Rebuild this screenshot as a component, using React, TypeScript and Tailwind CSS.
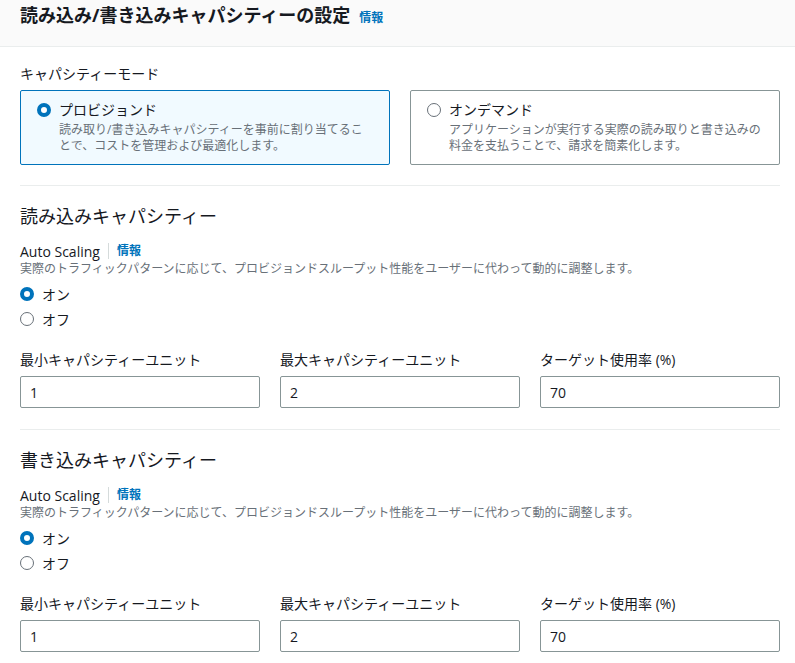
const font = { fontFamily: '"Open Sans", "Noto Sans CJK JP", sans-serif' };

const Radio = ({ checked }: { checked: boolean }) =>
  checked ? (
    <span className="inline-block w-[14px] h-[14px] rounded-full border-[4px] border-[#0073bb] bg-white shrink-0" />
  ) : (
    <span className="inline-block w-[14px] h-[14px] rounded-full border-[1.5px] border-[#687078] bg-white shrink-0" />
  );

const ModeCard = ({
  title,
  lines,
  selected,
}: {
  title: string;
  lines: string[];
  selected: boolean;
}) => (
  <div
    className={
      selected
        ? 'border border-[#0073bb] bg-[#f1faff] rounded-[2px] pt-[9px] pb-[10px] pl-4 pr-3'
        : 'border border-[#879596] bg-white rounded-[2px] pt-[9px] pb-[10px] pl-4 pr-3'
    }
  >
    <div className="flex items-center gap-2 h-5">
      <Radio checked={selected} />
      <span className="text-[14px] leading-5 text-[#16191f]">{title}</span>
    </div>
    <div className="mt-[2px] pl-[22px] text-[12px] leading-4 text-[#687078]">
      {lines.map((l) => (
        <div key={l}>{l}</div>
      ))}
    </div>
  </div>
);

const CapacitySection = ({ title }: { title: string }) => (
  <div>
    <h3 className="mt-[18px] text-[18px] leading-6 font-normal text-[#16191f]">{title}</h3>
    <div className="mt-[13px] flex items-center h-5 text-[14px] text-[#16191f]">
      <span>Auto Scaling</span>
      <span className="mx-2 h-4 w-px bg-[#d5dbdb]" />
      <span className="text-[12px] font-bold text-[#0073bb]">情報</span>
    </div>
    <p className="text-[12px] leading-4 text-[#687078]">
      実際のトラフィックパターンに応じて、プロビジョンドスループット性能をユーザーに代わって動的に調整します。
    </p>
    <div className="mt-[7px] flex flex-col gap-[5px]">
      <label className="flex items-center gap-2 h-5 text-[14px] text-[#16191f]">
        <Radio checked />
        オン
      </label>
      <label className="flex items-center gap-2 h-5 text-[14px] text-[#16191f]">
        <Radio checked={false} />
        オフ
      </label>
    </div>
    <div className="mt-[21px] grid grid-cols-3 gap-5">
      {[
        ['最小キャパシティーユニット', '1'],
        ['最大キャパシティーユニット', '2'],
        ['ターゲット使用率 (%)', '70'],
      ].map(([label, value]) => (
        <div key={label}>
          <div className="text-[14px] leading-5 text-[#16191f]">{label}</div>
          <input
            readOnly
            value={value}
            style={font}
            className="mt-[6px] w-full h-8 border border-[#879596] rounded-[2px] px-[9px] text-[14px] text-[#16191f] bg-white outline-none"
          />
        </div>
      ))}
    </div>
  </div>
);

export default function App() {
  return (
    <div className="w-[795px] min-h-[663px] bg-white overflow-hidden" style={font}>
      <div className="h-[47px] bg-[#fafafa] border-b border-[#eaeded] pl-5 pt-1">
        <div className="flex items-baseline gap-[9px] leading-[22px]">
          <h2 className="text-[18px] font-bold text-[#16191f]">読み込み/書き込みキャパシティーの設定</h2>
          <span className="text-[12px] font-bold text-[#0073bb]">情報</span>
        </div>
      </div>
      <div className="pl-5 pr-[15px]">
        <div className="mt-[17px] text-[14px] leading-5 text-[#16191f]">キャパシティーモード</div>
        <div className="mt-[6px] grid grid-cols-2 gap-5">
          <ModeCard
            selected
            title="プロビジョンド"
            lines={['読み取り/書き込みキャパシティーを事前に割り当てるこ', 'とで、コストを管理および最適化します。']}
          />
          <ModeCard
            selected={false}
            title="オンデマンド"
            lines={['アプリケーションが実行する実際の読み取りと書き込みの', '料金を支払うことで、請求を簡素化します。']}
          />
        </div>
        <div className="mt-5 border-t border-[#eaeded]" />
        <CapacitySection title="読み込みキャパシティー" />
        <div className="mt-[21px] border-t border-[#eaeded]" />
        <CapacitySection title="書き込みキャパシティー" />
      </div>
    </div>
  );
}
